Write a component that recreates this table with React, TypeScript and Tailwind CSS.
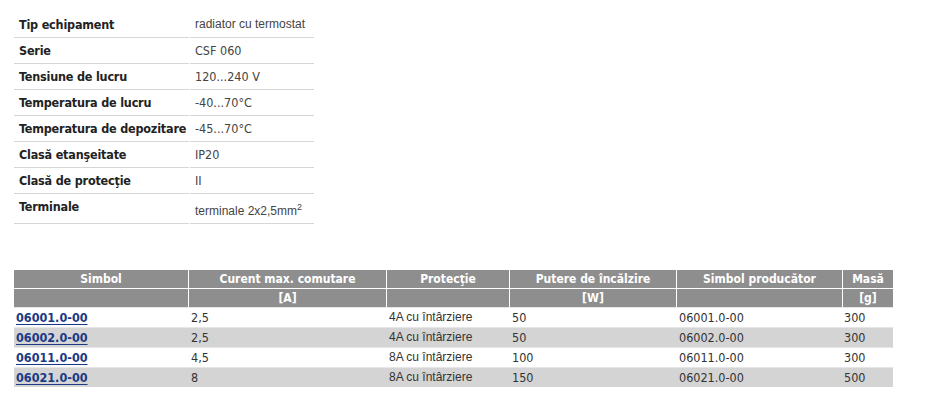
import React from "react";

const T = "font-['DejaVu_Sans_Condensed','DejaVu_Sans',sans-serif]";
const S = "font-['Liberation_Sans','Arial',sans-serif]";

const specs: { label: string; value: React.ReactNode; seg?: boolean }[] = [
  { label: "Tip echipament", value: "radiator cu termostat", seg: true },
  { label: "Serie", value: "CSF 060" },
  { label: "Tensiune de lucru", value: "120...240 V" },
  { label: "Temperatura de lucru", value: "-40...70°C" },
  { label: "Temperatura de depozitare", value: "-45...70°C" },
  { label: "Clasă etanşeitate", value: "IP20" },
  { label: "Clasă de protecţie", value: "II" },
];

const cols = "grid grid-cols-[174px_197px_122px_166px_165px_50px] gap-x-px";

const headers = ["Simbol", "Curent max. comutare", "Protecţie", "Putere de încălzire", "Simbol producător", "Masă"];
const units = ["", "[A]", "", "[W]", "", "[g]"];

const rows = [
  ["06001.0-00", "2,5", "4A cu întârziere", "50", "06001.0-00", "300"],
  ["06002.0-00", "2,5", "4A cu întârziere", "50", "06002.0-00", "300"],
  ["06011.0-00", "4,5", "8A cu întârziere", "100", "06011.0-00", "300"],
  ["06021.0-00", "8", "8A cu întârziere", "150", "06021.0-00", "500"],
];

export default function App() {
  return (
    <div className="w-[931px] h-[402px] bg-white overflow-hidden">
      <div className="pt-[12px] pl-[14px]">
        <div className="w-[300px] flex flex-col">
          {specs.map((s) => (
            <div key={s.label} className="grid grid-cols-[175px_124px] gap-x-px h-[26px]">
              <div className={`${T} font-bold text-[12.5px] tracking-[-0.2px] text-[#222] pl-[5px] pt-[1px] border-b border-[#d6d6d6] flex items-center whitespace-nowrap`}>
                {s.label}
              </div>
              <div
                className={`${s.seg ? S + " text-[12px] pb-[1px]" : T + " text-[12.5px] pt-[1px]"} text-[#444] pl-[5px] border-b border-[#d6d6d6] flex items-center whitespace-nowrap`}
              >
                {s.value}
              </div>
            </div>
          ))}
          <div className="grid grid-cols-[175px_124px] gap-x-px h-[30px]">
            <div className={`${T} font-bold text-[12.5px] tracking-[-0.2px] text-[#222] pl-[5px] border-b border-[#d6d6d6] pt-[5px] leading-[16px]`}>
              Terminale
            </div>
            <div className={`${S} text-[12px] text-[#444] pl-[5px] border-b border-[#d6d6d6] pt-[9px] leading-[16px] whitespace-nowrap`}>
              terminale 2x2,5mm<sup className="text-[9px] relative -top-[5px]">2</sup>
            </div>
          </div>
        </div>

        <div className="mt-[46px] w-[879px] flex flex-col">
          <div className={`${cols} h-[18px]`}>
            {headers.map((h) => (
              <div key={h} className={`${T} font-bold text-[12px] text-white bg-[#8e8e8e] flex items-center justify-center whitespace-nowrap`}>
                {h}
              </div>
            ))}
          </div>
          <div className={`${cols} h-[18px] mt-px`}>
            {units.map((u, i) => (
              <div key={i} className={`${T} font-bold text-[12px] text-white bg-[#8e8e8e] flex items-center justify-center`}>
                {u}
              </div>
            ))}
          </div>
          {rows.map((r, ri) => (
            <div
              key={ri}
              className={`${cols} h-[20px] ${ri % 2 === 1 ? "bg-[#d4d4d4]" : "bg-white"} border-t border-[#e6e6e6]`}
            >
              {r.map((c, ci) => (
                <div
                  key={ci}
                  className={`${ci === 2 ? S + " text-[12px] pb-[2px]" : T + " text-[12.5px]"} flex items-center pl-[2px] ${ci === 5 ? "pl-px" : ""} text-[#333] whitespace-nowrap`}
                >
                  {ci === 0 ? (
                    <a href="#" className={`${T} font-bold text-[12.5px] text-[#1a3a86] underline underline-offset-2`}>
                      {c}
                    </a>
                  ) : (
                    c
                  )}
                </div>
              ))}
            </div>
          ))}
        </div>
      </div>
    </div>
  );
}
